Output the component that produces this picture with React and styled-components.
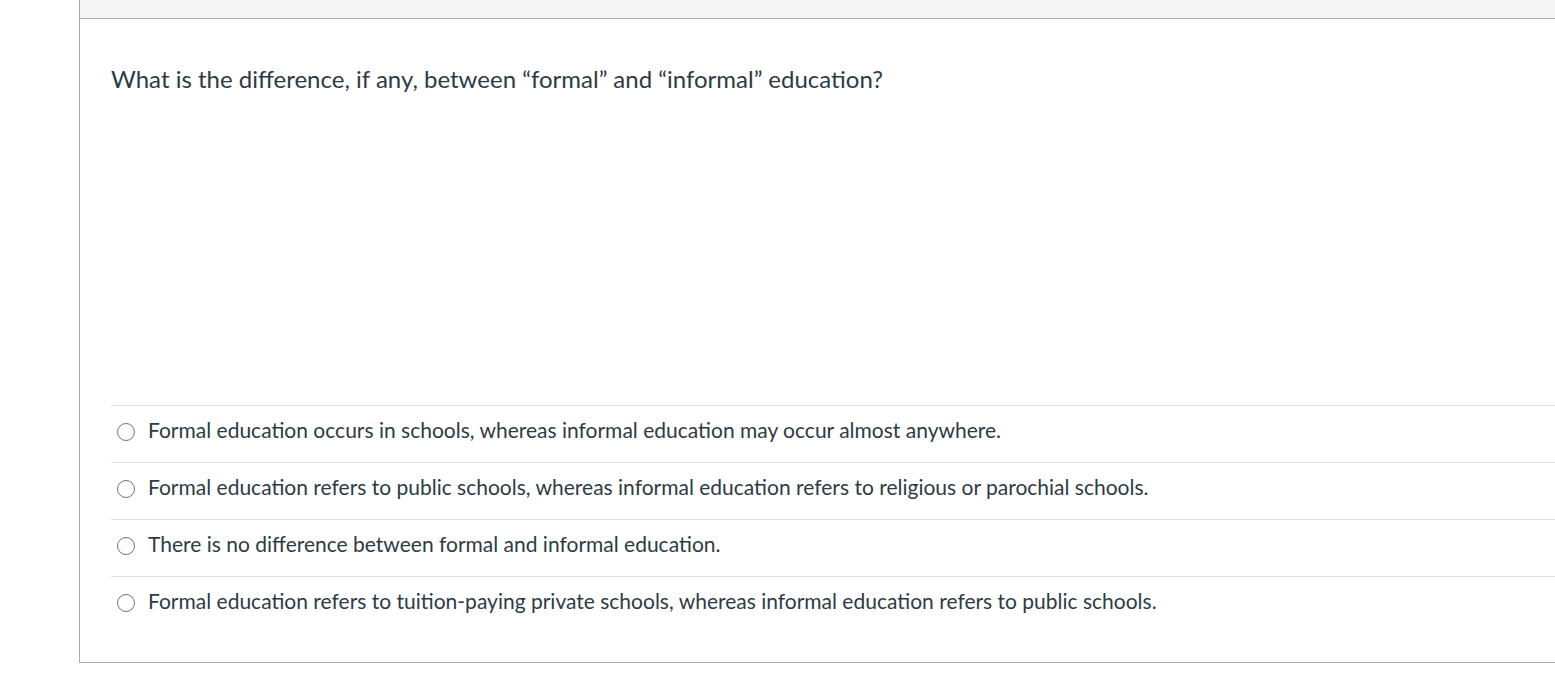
import { createGlobalStyle, styled } from 'styled-components';

const GlobalStyle = createGlobalStyle`
  body {
    margin: 0;
    background: #ffffff;
    font-family: Lato, "Liberation Sans", sans-serif;
    color: #2d3b45;
  }
`;

const Page = styled.div`
  padding-left: 79px;
  height: 691px;
  overflow: hidden;
`;

const Card = styled.div`
  border-left: 1px solid #aaaaaa;
  border-bottom: 1px solid #aaaaaa;
  height: 663px;
  box-sizing: border-box;
  display: flex;
  flex-direction: column;
`;

const Header = styled.div`
  height: 18px;
  background-color: #f5f5f5;
  border-bottom: 1px solid #aaaaaa;
  flex-shrink: 0;
`;

const Body = styled.div`
  padding: 0 0 0 31px;
  flex: 1;
  display: flex;
  flex-direction: column;
`;

const Question = styled.p`
  margin: 44px 0 0;
  font-size: 24px;
  line-height: 32px;
  height: 342px;
`;

const Answers = styled.div`
  display: flex;
  flex-direction: column;
`;

const Answer = styled.label`
  display: flex;
  align-items: center;
  gap: 13px;
  height: 57px;
  box-sizing: border-box;
  border-top: 1px solid #dddddd;
  font-size: 21px;
  line-height: 24px;
  padding-left: 6px;
  padding-bottom: 8px;
  cursor: pointer;
`;

const Radio = styled.span`
  width: 16px;
  height: 16px;
  border: 1.5px solid #737373;
  border-radius: 50%;
  flex-shrink: 0;
  margin-top: 3px;
`;

const answers = [
  'Formal education occurs in schools, whereas informal education may occur almost anywhere.',
  'Formal education refers to public schools, whereas informal education refers to religious or parochial schools.',
  'There is no difference between formal and informal education.',
  'Formal education refers to tuition-paying private schools, whereas informal education refers to public schools.',
];

export default function App() {
  return (
    <>
      <GlobalStyle />
      <Page>
        <Card>
          <Header />
          <Body>
            <Question>
              What is the difference, if any, between “formal” and “informal” education?
            </Question>
            <Answers>
              {answers.map((a) => (
                <Answer key={a}>
                  <Radio />
                  {a}
                </Answer>
              ))}
            </Answers>
          </Body>
        </Card>
      </Page>
    </>
  );
}
